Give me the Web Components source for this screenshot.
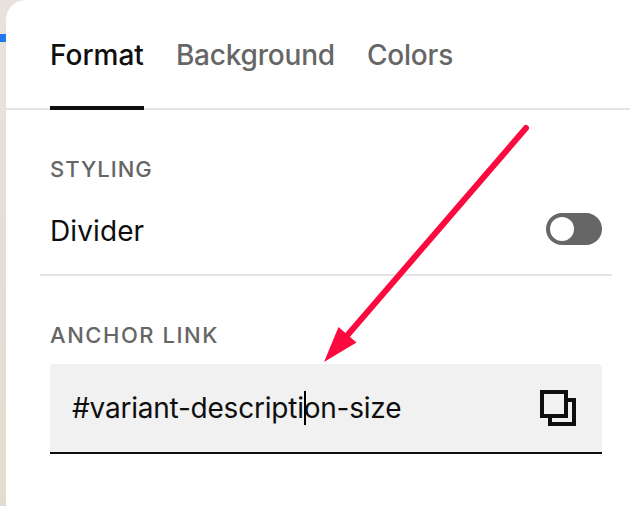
<!DOCTYPE html>
<html lang="en">
<head>
<meta charset="utf-8">
<title>Section settings</title>
<style>
  html, body { margin: 0; height: 100%; overflow: hidden; }
  body { font-family: Inter, "Liberation Sans", sans-serif; font-size: 28px; color: #0e0e0e; }
</style>
</head>
<body>
<settings-panel>
  <tab-bar slot="tabs">
    <tab-item active style="letter-spacing: 0">Format</tab-item>
    <tab-item>Background</tab-item>
    <tab-item>Colors</tab-item>
  </tab-bar>
  <panel-section label="Styling" style="--tracking: 1px">
    <toggle-row>Divider</toggle-row>
  </panel-section>
  <panel-section label="Anchor Link">
    <copy-field>#variant-description-size</copy-field>
  </panel-section>
</settings-panel>
<pointer-arrow></pointer-arrow>

<script>
(() => {
  function define(tagName, markup) {
    if (customElements.get(tagName)) return;
    customElements.define(tagName, class extends HTMLElement {
      constructor() {
        super();
        this.attachShadow({ mode: 'open' }).innerHTML = markup;
        const label = this.shadowRoot.querySelector('.label');
        if (label) label.textContent = (this.getAttribute('label') || '').toUpperCase();
      }
    });
  }

  define('settings-panel', `
    <style>
      :host { display: flex; height: 100%; background: linear-gradient(#e9e2dc, #e4dfd5 45%, #e1ddd0); }
      .edge { flex: 0 0 6px; padding-top: 34px; }
      .edge i { display: block; height: 8px; background: #1f78ee; }
      .panel { flex: 1; background: #fff; border-top-left-radius: 20px; }
    </style>
    <div class="edge"><i></i></div>
    <div class="panel"><slot name="tabs"></slot><slot></slot></div>
  `);

  define('tab-bar', `
    <style>
      :host { display: flex; gap: 32px; height: 108px; padding-left: 44px; border-bottom: 2px solid #e4e4e4; }
    </style>
    <slot></slot>
  `);

  define('tab-item', `
    <style>
      :host {
        display: block; box-sizing: border-box; height: 110px; padding-top: 38px;
        line-height: 34px; font-weight: 500; letter-spacing: -.2px; color: #666; white-space: nowrap;
      }
      :host([active]) { color: #0e0e0e; border-bottom: 4px solid #0e0e0e; }
    </style>
    <slot></slot>
  `);

  define('panel-section', `
    <style>
      :host { display: block; padding: 40px 28px 0 44px; }
      .label { font-size: 22px; line-height: 28px; font-weight: 500; letter-spacing: var(--tracking, 1.55px); color: #666; }
    </style>
    <div><span class="label"></span></div>
    <slot></slot>
  `);

  define('toggle-row', `
    <style>
      :host {
        display: flex; justify-content: space-between; align-items: center;
        height: 90px; margin: 0 -10px; padding: 0 10px; border-bottom: 2px solid #e4e4e4;
        letter-spacing: .1px;
      }
      span { padding-top: 3px; }
      .track { width: 56px; height: 32px; box-sizing: border-box; padding: 4px; border-radius: 16px; background: #666; }
      .knob { width: 24px; height: 24px; border-radius: 50%; background: #fff; }
    </style>
    <span><slot></slot></span>
    <div class="track"><div class="knob"></div></div>
  `);

  define('copy-field', `
    <style>
      :host {
        display: flex; justify-content: space-between; align-items: center; position: relative;
        box-sizing: border-box; height: 90px; margin-top: 14px; padding: 0 26px 0 22px;
        background: #f1f1f1; border-bottom: 2px solid #0e0e0e; border-radius: 4px 4px 0 0;
        letter-spacing: -.22px;
      }
      svg { display: block; }
      /* text caret */
      i { position: absolute; left: 254px; top: 27px; width: 2px; height: 34px; background: #000; }
    </style>
    <span><slot></slot></span>
    <i></i>
    <svg width="36" height="36" fill="none" stroke="#0e0e0e" stroke-width="4">
      <path d="M2 2H26V26H2ZM28 10H34V34H10V28"/>
    </svg>
  `);

  define('pointer-arrow', `
    <style>
      :host { position: absolute; left: 0; top: 0; pointer-events: none; }
      svg { display: block; }
    </style>
    <svg width="630" height="506">
      <path d="M526 128L345 338" stroke="#fb0a3f" stroke-width="6" stroke-linecap="round"/>
      <path d="M324 362L338.500 327L356.500 342.500Z" fill="#fb0a3f"/>
    </svg>
  `);
})();
</script>
</body>
</html>
